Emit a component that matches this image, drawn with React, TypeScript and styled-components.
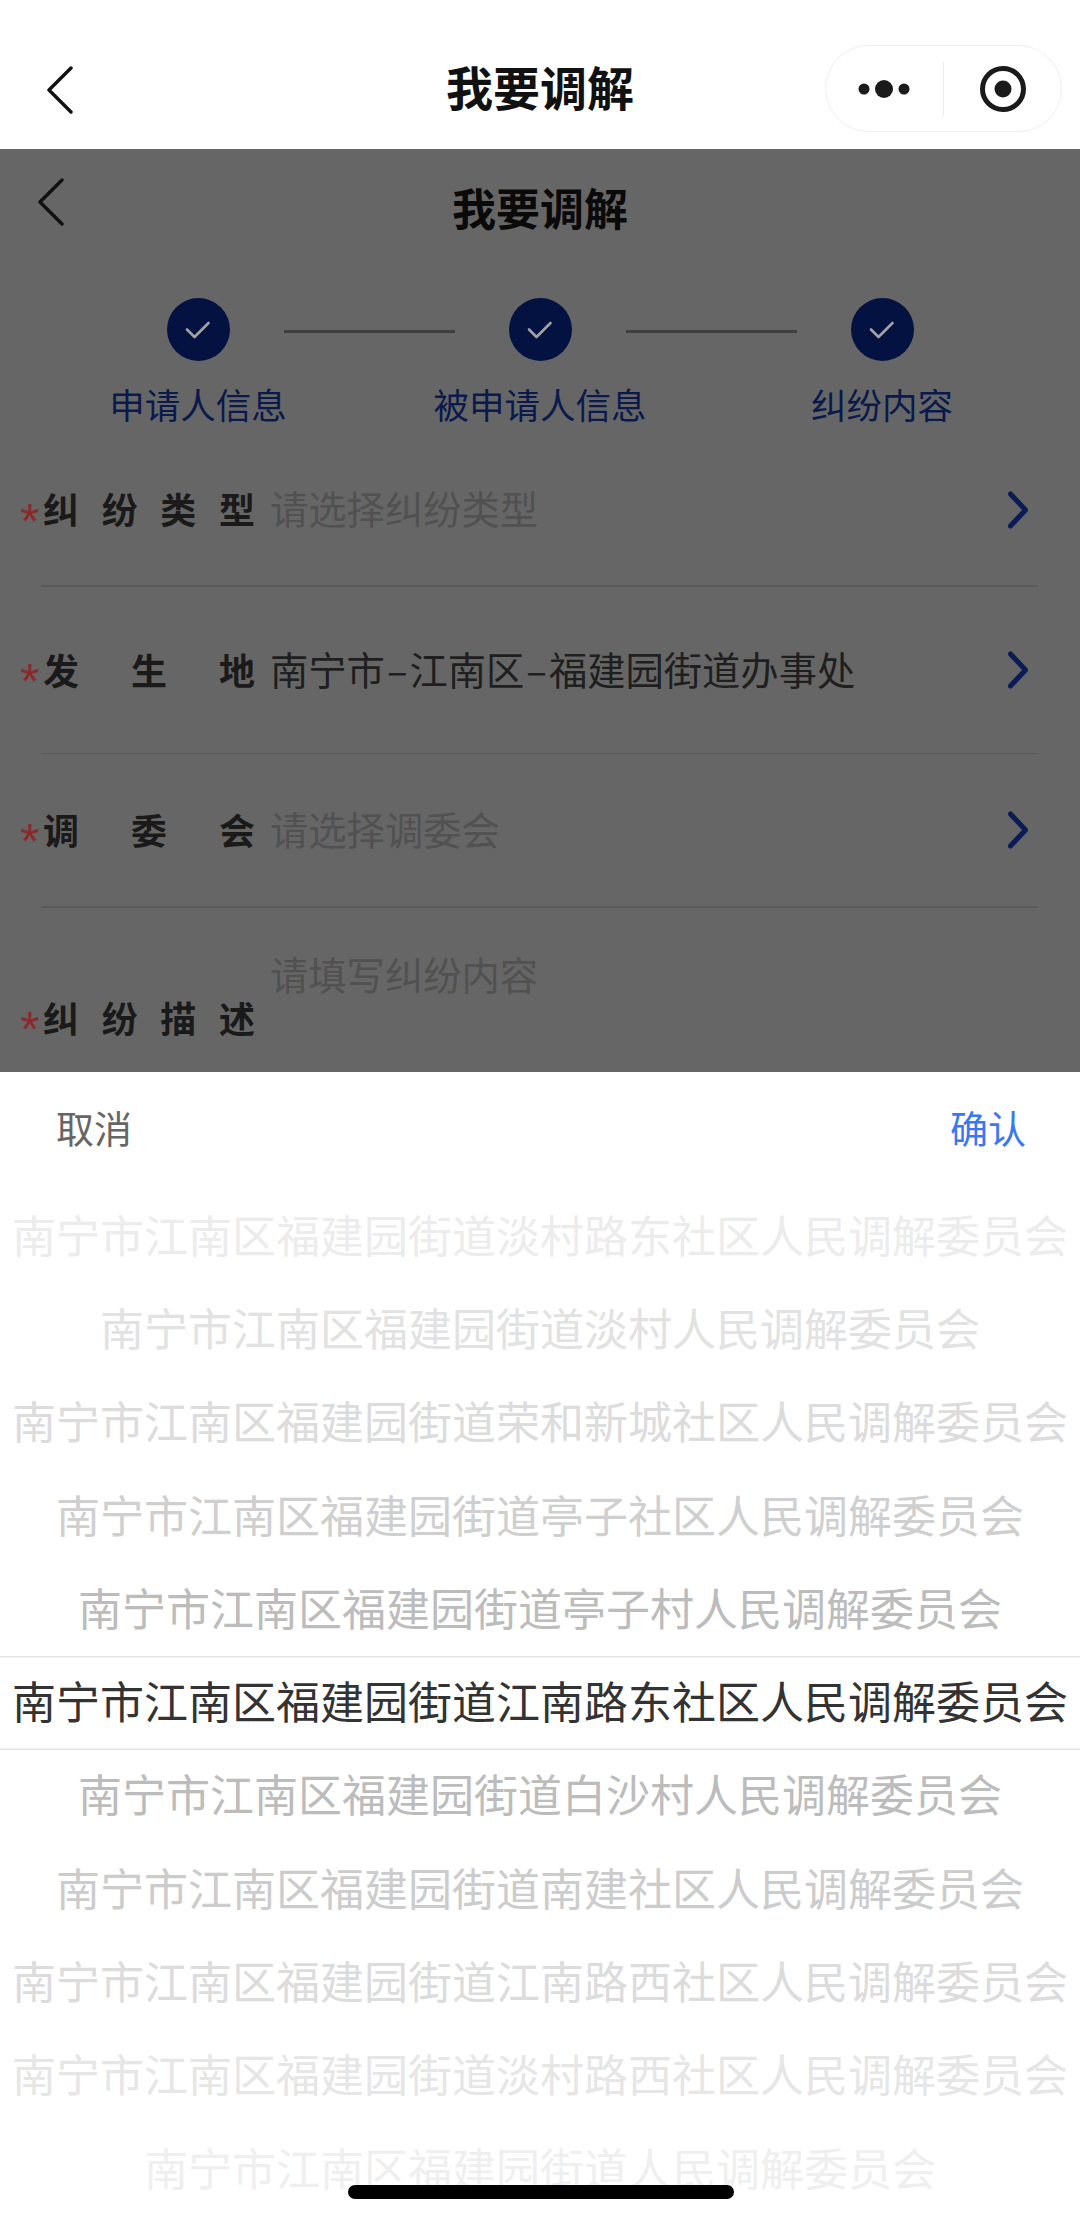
import React from "react";
import styled, { createGlobalStyle } from "styled-components";

const GlobalStyle = createGlobalStyle`
  html, body {
    margin: 0;
    padding: 0;
    background: #fff;
  }
  * {
    box-sizing: border-box;
  }
  body {
    font-family: "Noto Sans CJK SC", "Noto Sans", sans-serif;
  }
`;

interface PickerOption {
  name: string;
  color: string;
}

const steps = ["申请人信息", "被申请人信息", "纠纷内容"];

const options: PickerOption[] = [
  { name: "南宁市江南区福建园街道淡村路东社区人民调解委员会", color: "#ececec" },
  { name: "南宁市江南区福建园街道淡村人民调解委员会", color: "#e2e2e2" },
  { name: "南宁市江南区福建园街道荣和新城社区人民调解委员会", color: "#dcdcdc" },
  { name: "南宁市江南区福建园街道亭子社区人民调解委员会", color: "#cfcfcf" },
  { name: "南宁市江南区福建园街道亭子村人民调解委员会", color: "#bcbcbc" },
  { name: "南宁市江南区福建园街道江南路东社区人民调解委员会", color: "#333333" },
  { name: "南宁市江南区福建园街道白沙村人民调解委员会", color: "#bcbcbc" },
  { name: "南宁市江南区福建园街道南建社区人民调解委员会", color: "#cccccc" },
  { name: "南宁市江南区福建园街道江南路西社区人民调解委员会", color: "#dcdcdc" },
  { name: "南宁市江南区福建园街道淡村路西社区人民调解委员会", color: "#e6e6e6" },
  { name: "南宁市江南区福建园街道人民调解委员会", color: "#efefef" },
];

const BackIcon: React.FC = () => (
  <svg width="28" height="48" viewBox="0 0 28 48" fill="none">
    <path d="M25 2 L3 24 L25 46" stroke="#111" strokeWidth="3.4" strokeLinecap="round" strokeLinejoin="round" />
  </svg>
);

const CheckIcon: React.FC = () => (
  <svg width="28" height="24" viewBox="0 0 28 24" fill="none">
    <path d="M3 11.5 L10.5 19 L24.5 5" stroke="#a2a2a2" strokeWidth="2.6" strokeLinecap="round" strokeLinejoin="round" />
  </svg>
);

const ChevronIcon: React.FC = () => (
  <ChevronBox width="22" height="38" viewBox="0 0 22 38" fill="none">
    <path d="M3.5 3 L18.5 19 L3.5 35" stroke="#0a1b55" strokeWidth="5" strokeLinecap="round" strokeLinejoin="round" />
  </ChevronBox>
);

const FormField: React.FC<{
  label: string;
  value: React.ReactNode;
  height: number;
  padTop?: number;
  padBottom?: number;
  filled?: boolean;
}> = ({ label, value, height, padTop = 0, padBottom = 0, filled }) => (
  <Field $height={height} $padTop={padTop} $padBottom={padBottom}>
    <Star>*</Star>
    <FieldLabel>{label}</FieldLabel>
    <FieldValue $filled={filled}>{value}</FieldValue>
    <ChevronIcon />
  </Field>
);

export default function App() {
  return (
    <Screen>
      <GlobalStyle />
      <NavBar>
        <NavBack>
          <BackIcon />
        </NavBack>
        <NavTitle>我要调解</NavTitle>
        <Capsule>
          <MoreButton>
            <svg width="52" height="20" viewBox="0 0 52 20">
              <circle cx="6" cy="10" r="5.5" fill="#1a1a1a" />
              <circle cx="26" cy="10" r="9" fill="#1a1a1a" />
              <circle cx="46" cy="10" r="5.5" fill="#1a1a1a" />
            </svg>
          </MoreButton>
          <CapsuleDivider />
          <MoreButton>
            <svg width="48" height="48" viewBox="0 0 48 48" fill="none">
              <circle cx="24" cy="24" r="20.5" stroke="#1a1a1a" strokeWidth="5" />
              <circle cx="24" cy="24" r="8.5" fill="#1a1a1a" />
            </svg>
          </MoreButton>
        </Capsule>
      </NavBar>

      <Page>
        <PageHeader>
          <PageBack>
            <BackIcon />
          </PageBack>
          <PageTitle>我要调解</PageTitle>
        </PageHeader>

        <StepTrack>
          <StepDot>
            <CheckIcon />
          </StepDot>
          <StepLine />
          <StepDot>
            <CheckIcon />
          </StepDot>
          <StepLine />
          <StepDot>
            <CheckIcon />
          </StepDot>
        </StepTrack>
        <StepLabels>
          {steps.map((step) => (
            <StepLabel key={step}>{step}</StepLabel>
          ))}
        </StepLabels>

        <FormField label="纠纷类型" value="请选择纠纷类型" height={157} padTop={3} />
        <Divider />
        <FormField
          label="发生地"
          value={
            <>
              南宁市<Dash>–</Dash>江南区<Dash>–</Dash>福建园街道办事处
            </>
          }
          height={166}
          padBottom={2}
          filled
        />
        <Divider />
        <FormField label="调委会" value="请选择调委会" height={152} padBottom={3} />
        <Divider />
        <DescField>
          <Star>*</Star>
          <FieldLabel>纠纷描述</FieldLabel>
          <DescValue>请填写纠纷内容</DescValue>
        </DescField>
      </Page>

      <Sheet>
        <SheetActions>
          <CancelButton>取消</CancelButton>
          <ConfirmButton>确认</ConfirmButton>
        </SheetActions>
        <Wheel>
          {options.map((option, index) => (
            <WheelRow key={option.name} $color={option.color} $selected={index === 5}>
              {option.name}
            </WheelRow>
          ))}
        </Wheel>
        <HomeBar />
      </Sheet>
    </Screen>
  );
}

const Screen = styled.div`
  width: 1080px;
  height: 2220px;
  overflow: hidden;
  display: flex;
  flex-direction: column;
  position: relative;
  background: #fff;
`;

const NavBar = styled.div`
  height: 149px;
  flex: none;
  display: grid;
  grid-template-columns: 1fr auto 1fr;
  align-items: center;
  padding-top: 28px;
  background: #fff;
`;

const NavBack = styled.div`
  display: flex;
  padding-left: 46px;
  margin-top: 2px;
`;

const NavTitle = styled.div`
  font-size: 47px;
  line-height: 60px;
  font-weight: 700;
  color: #111;
  margin-top: -6px;
`;

const Capsule = styled.div`
  justify-self: end;
  width: 237px;
  height: 87px;
  margin-right: 18px;
  border: 1.5px solid #efefef;
  border-radius: 44px;
  display: flex;
  align-items: center;
  background: #fff;
`;

const MoreButton = styled.div`
  flex: 1;
  display: flex;
  align-items: center;
  justify-content: center;
`;

const CapsuleDivider = styled.div`
  width: 1.5px;
  height: 54px;
  background: #ececec;
`;

const Page = styled.div`
  height: 923px;
  flex: none;
  overflow: hidden;
  background: #666;
`;

const PageHeader = styled.div`
  height: 114px;
  display: grid;
  grid-template-columns: 1fr auto 1fr;
  align-items: center;
`;

const PageBack = styled.div`
  display: flex;
  padding-left: 37px;
  margin-top: -8px;
`;

const PageTitle = styled.div`
  font-size: 44px;
  line-height: 56px;
  font-weight: 700;
  color: #0a0a0a;
  margin-top: 2px;
`;

const StepTrack = styled.div`
  margin-top: 35px;
  display: flex;
  align-items: center;
  justify-content: center;
  gap: 54px;
`;

const StepDot = styled.div`
  width: 63px;
  height: 63px;
  border-radius: 50%;
  background: #031240;
  display: flex;
  align-items: center;
  justify-content: center;
`;

const StepLine = styled.div`
  width: 171px;
  height: 3px;
  margin-top: 4px;
  background: #3f3f3f;
`;

const StepLabels = styled.div`
  display: grid;
  grid-template-columns: repeat(3, 342px);
  justify-content: center;
  margin-top: 19px;
`;

const StepLabel = styled.div`
  text-align: center;
  font-size: 35.5px;
  line-height: 48px;
  color: #0a1a4d;
`;

const Field = styled.div<{ $height: number; $padTop: number; $padBottom: number }>`
  height: ${(p) => p.$height}px;
  display: flex;
  align-items: center;
  padding: ${(p) => p.$padTop}px 51px ${(p) => p.$padBottom}px 20px;
`;

const ChevronBox = styled.svg`
  flex: none;
  margin-top: 3px;
`;

const Star = styled.span`
  flex: none;
  width: 23px;
  height: 36px;
  margin-top: 13px;
  font-family: "Liberation Sans", sans-serif;
  font-size: 50px;
  line-height: 50px;
  color: #8a2a2a;
`;

const FieldLabel = styled.div`
  flex: none;
  width: 212px;
  margin-right: 15px;
  font-size: 36px;
  line-height: 48px;
  font-weight: 700;
  color: #1a1a1a;
  text-align: justify;
  text-align-last: justify;
`;

const FieldValue = styled.div<{ $filled?: boolean }>`
  flex: 1;
  font-size: 38.3px;
  line-height: 52px;
  white-space: nowrap;
  color: ${(p) => (p.$filled ? "#1f1f1f" : "#515151")};
`;

const Dash = styled.span`
  padding: 0 2px;
`;

const Divider = styled.div`
  height: 1.5px;
  margin: 0 42px 0 41px;
  background: #5a5a5a;
`;

const DescField = styled.div`
  height: 165px;
  display: flex;
  align-items: flex-end;
  padding: 0 51px 32px 20px;
`;

const DescValue = styled(FieldValue)`
  align-self: flex-start;
  margin-top: 40px;
  color: #515151;
`;

const Sheet = styled.div`
  flex: 1;
  position: relative;
  background: #fff;
`;

const SheetActions = styled.div`
  height: 118px;
  display: flex;
  justify-content: space-between;
  align-items: center;
  padding: 0 54px 9px 56px;
`;

const CancelButton = styled.div`
  font-size: 38px;
  line-height: 52px;
  color: #666;
`;

const ConfirmButton = styled(CancelButton)`
  color: #3a78f2;
`;

const Wheel = styled.div`
  display: flex;
  flex-direction: column;
`;

const WheelRow = styled.div<{ $color: string; $selected: boolean }>`
  flex: none;
  height: 93.3px;
  padding-bottom: 6px;
  display: flex;
  align-items: center;
  justify-content: center;
  font-size: 44px;
  white-space: nowrap;
  color: ${(p) => p.$color};
  ${(p) => p.$selected && "box-shadow: inset 0 1.5px 0 #e4e4e4, inset 0 -1.5px 0 #e4e4e4;"}
`;

const HomeBar = styled.div`
  position: absolute;
  left: 348px;
  bottom: 21px;
  width: 386px;
  height: 14px;
  border-radius: 7px;
  background: #000;
`;
